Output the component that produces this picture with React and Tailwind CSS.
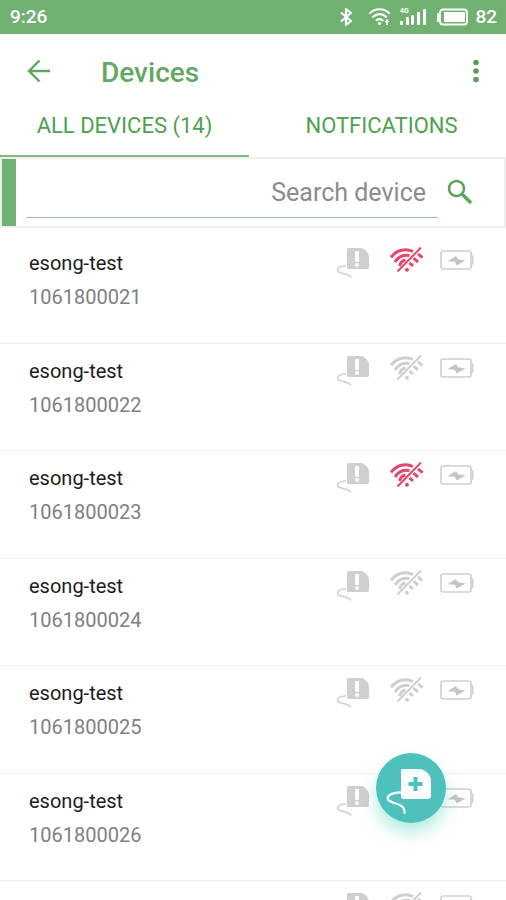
import { useState } from "react";

const devices = [
  { id: "1061800021", name: "esong-test", offline: true },
  { id: "1061800022", name: "esong-test", offline: false },
  { id: "1061800023", name: "esong-test", offline: true },
  { id: "1061800024", name: "esong-test", offline: false },
  { id: "1061800025", name: "esong-test", offline: false },
  { id: "1061800026", name: "esong-test", offline: false },
  { id: "1061800027", name: "esong-test", offline: false },
];

function StatusIcons() {
  return (
    <svg width="134" height="20" viewBox="0 0 134 20" fill="none">
      {/* bluetooth */}
      <path
        d="M2 5.5 12 14l-5 4V2l5 4L2 14.5"
        stroke="white"
        strokeWidth="2.2"
        strokeLinejoin="round"
      />
      {/* wifi */}
      <g stroke="white" strokeWidth="2.2" strokeLinecap="round">
        <path d="M31 6c5.5-5 13.5-5 19 0" />
        <path d="M34 9.8c4-3.5 9.500-3.500 13 0" />
        <path d="M37.5 13.400c2-1.600 4-1.600 6 0" />
      </g>
      <circle cx="40.5" cy="16.5" r="1.600" fill="white" />
      <path d="m45.5 15 2.5-3 2.5 3h-1.500v3h-2v-3z" fill="white" />
      {/* signal */}
      <text
        x="61"
        y="6"
        fontSize="7"
        fontFamily="Roboto, sans-serif"
        fontWeight="700"
        fill="white"
      >
        4G
      </text>
      <g fill="white">
        <rect x="61" y="14" width="3" height="4" rx="1" />
        <rect x="67" y="10" width="3" height="8" rx="1" />
        <rect x="72" y="8" width="3" height="10" rx="1" />
        <rect x="78" y="5" width="3" height="13" rx="1" />
        <rect x="84" y="2" width="3" height="16" rx="1" />
      </g>
      {/* battery */}
      <path d="M98 7v7c0 .5.5 1 1 1h2V6h-2c-.5 0-1 .5-1 1z" fill="white" />
      <rect
        x="101"
        y="2.5"
        width="27"
        height="15"
        rx="3"
        stroke="white"
        strokeWidth="1.800"
      />
      <rect x="105" y="5" width="21" height="10" fill="white" />
    </svg>
  );
}

function TagIcon() {
  return (
    <svg width="34" height="34" viewBox="0 0 34 34" fill="none">
      <path
        d="M13 2h13c4 2 7 5 7 9v10c0 1-.5 2-2 2H13c-1.500 0-2-.5-2-2V4c0-1.500.5-2 2-2z"
        fill="#cfcfcf"
      />
      <rect x="19" y="5" width="4" height="11" rx="1" fill="white" />
      <rect x="19" y="17" width="4" height="4" rx="2" fill="white" />
      <path
        d="M10 20C5 19.5 0 22.500 2 25.500c2 2.500 11 1.500 13 6"
        stroke="#cfcfcf"
        strokeWidth="1.5"
      />
    </svg>
  );
}

function NoWifiIcon({ className }) {
  return (
    <svg
      width="34"
      height="34"
      viewBox="0 0 34 34"
      fill="none"
      stroke="currentColor"
      className={className}
    >
      <g strokeWidth="3">
        <path d="M1 11.500C6.500 3.500 16 2 23 5.500" />
        <path d="M5 16C8.500 10 14 8.500 19.500 9.500" />
        <path d="M9.500 20C10.500 16.500 13 14.500 15.500 14" />
        <path d="m28 7.800 4.500 3.800" />
        <path d="m23.500 12.200 4.500 3.800" />
        <path d="m19.500 16.800 3.500 3.200" />
      </g>
      <path d="M7.500 25.500 31 1.500" strokeWidth="2" />
      <circle cx="17" cy="23.800" r="2" fill="currentColor" stroke="none" />
    </svg>
  );
}

function BatteryIcon() {
  return (
    <svg width="34" height="34" viewBox="0 0 34 34" fill="none">
      <rect
        x="1"
        y="5"
        width="30"
        height="18"
        rx="2"
        stroke="#cfcfcf"
        strokeWidth="1.600"
      />
      <path
        d="M31 9c1.200.5 1.800 1 1.800 2v6c0 1-.6 1.500-1.800 2"
        stroke="#cfcfcf"
        strokeWidth="1.5"
      />
      <path d="m7.500 15.200 8.500-5.200 2 3.200 7.500 1.200-9 5-1.500-3.700z" fill="#c4c4c4" />
    </svg>
  );
}

function DeviceRow({ device }) {
  return (
    <li className="flex shrink-0 items-start justify-between border-b border-[#f0f0f0] pt-2.5 pr-8 pl-[29px] odd:h-[108px] even:h-[107px]">
      <div className="pt-[5px]">
        <div className="text-[20px] leading-6 text-[#1c1c1c]">{device.name}</div>
        <div className="mt-2 text-[20px] leading-7 text-[#808080]">
          {device.id}
        </div>
      </div>
      <div className="flex gap-4">
        <TagIcon />
        <div className="ml-1">
          <NoWifiIcon
            className={device.offline ? "text-[#e5476a]" : "text-[#cfcfcf]"}
          />
        </div>
        <BatteryIcon />
      </div>
    </li>
  );
}

export default function App() {
  const [tab, setTab] = useState("devices");
  const [search, setSearch] = useState("");

  const visibleDevices = devices.filter((d) => d.id.includes(search));

  return (
    <div className="flex h-screen flex-col overflow-hidden bg-white font-['Roboto',sans-serif]">
      <div className="flex h-[34px] shrink-0 items-center justify-between bg-[#70b070] pr-[9px] pl-2.5 text-white">
        <span className="text-[19px] font-medium">9:26</span>
        <div className="flex items-center gap-0.5">
          <StatusIcons />
          <span className="text-[19px] font-medium">82</span>
        </div>
      </div>

      <header className="flex h-[70px] shrink-0 items-center pt-2 pr-5 pl-[27px]">
        <button aria-label="Back" className="-mt-1">
          <svg
            width="24"
            height="24"
            viewBox="0 0 24 24"
            fill="none"
            stroke="#5fa860"
            strokeWidth="2.400"
          >
            <path d="M23 12H2.500M12.500 1.500 2 12l10.500 10.500" />
          </svg>
        </button>
        <h1 className="ml-[50px] flex-1 text-[28px] font-medium text-[#62a863]">
          Devices
        </h1>
        <button aria-label="More options" className="-mt-1">
          <svg width="20" height="24" viewBox="0 0 20 24" fill="#55a056">
            <circle cx="10" cy="3.5" r="2.800" />
            <circle cx="10" cy="12" r="2.800" />
            <circle cx="10" cy="20.5" r="2.800" />
          </svg>
        </button>
      </header>

      <nav className="flex h-[53px] shrink-0 text-[22px] text-[#4f9f50]">
        <button
          onClick={() => setTab("devices")}
          className={
            "flex-1 border-b-2 pb-2 " +
            (tab === "devices" ? "border-[#80b981]" : "border-transparent")
          }
        >
          ALL DEVICES (14)
        </button>
        <button
          onClick={() => setTab("notifications")}
          className={
            "flex-1 border-b-2 pb-2 pl-2 " +
            (tab === "notifications" ? "border-[#80b981]" : "border-transparent")
          }
        >
          NOTFICATIONS
        </button>
      </nav>

      <div className="flex h-[71px] shrink-0 border-2 border-[#eeeeee]">
        <div className="w-3.5 bg-[#70b070]"></div>
        <input
          type="text"
          value={search}
          onChange={(e) => setSearch(e.target.value)}
          placeholder="Search device"
          aria-label="Search device"
          className="mb-2 ml-[11px] min-w-0 flex-1 border-b border-[#94c495] pt-2.5 pr-3 text-right text-[25px] text-[#808080] outline-none placeholder:text-[#8c8c8c]"
        />
        <button aria-label="Search" className="mr-[31px] ml-[9px] pb-0.5">
          <svg
            width="26"
            height="26"
            viewBox="0 0 26 26"
            fill="none"
            stroke="#5aa55b"
          >
            <circle cx="9.5" cy="9.5" r="7.500" strokeWidth="2.600" />
            <path d="m15.500 15.500 8.500 8.500" strokeWidth="3.400" />
          </svg>
        </button>
      </div>

      <ul className="flex min-h-0 flex-1 flex-col overflow-hidden pt-2">
        {visibleDevices.map((device) => (
          <DeviceRow key={device.id} device={device} />
        ))}
      </ul>

      <button
        aria-label="Add device"
        className="fixed right-[60px] bottom-[77px] flex size-[70px] items-center justify-center rounded-full bg-[#4fc1bd] shadow-[0_10px_16px_rgba(110,220,195,0.5)]"
      >
        <svg width="70" height="70" viewBox="0 0 70 70" fill="none">
          <path
            d="M27 16h17c6 1 11 6 11 12v15c0 2-1 3-3 3H28c-2 0-3-1-3-3V18c0-1.500.5-2 2-2z"
            fill="white"
          />
          <path d="M39.500 24v14M32.500 31h14" stroke="#4fc1bd" strokeWidth="4" />
          <path
            d="M26 39.500C18 39 10 42 12 46.500c2 4.500 18 3 16.500 14"
            stroke="white"
            strokeWidth="2.200"
          />
        </svg>
      </button>
    </div>
  );
}
